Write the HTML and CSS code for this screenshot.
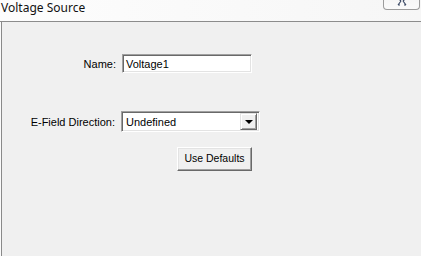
FILE: index.html
```html
<!DOCTYPE html>
<html lang="en">
<head>
    <meta charset="UTF-8">
    <title>Voltage Source</title>
    <link rel="stylesheet" href="styles.css">
</head>
<body>
    <div class="window">
        <div class="title-bar">
            <span class="title">Voltage Source</span>
            <div class="close-button">
                <svg width="10" height="8" viewBox="0 0 10 8">
                    <path d="M1 0 L4 3 M9 0 L6 3 M4 3 L1 7 M6 3 L9 7 M1 7 L3 7 M7 7 L9 7" stroke="#3c4a66" stroke-width="1.2" fill="none"/>
                </svg>
            </div>
        </div>
        <div class="panel">
            <div class="form-row name-row">
                <label class="field-label">Name:</label>
                <div class="text-box">Voltage1</div>
            </div>
            <div class="form-row direction-row">
                <label class="field-label">E-Field Direction:</label>
                <div class="combo-box">
                    <span class="combo-value">Undefined</span>
                    <div class="combo-button"><span class="arrow"></span></div>
                </div>
            </div>
            <div class="button-row">
                <div class="push-button">Use Defaults</div>
            </div>
        </div>
    </div>
</body>
</html>
```

FILE: styles.css
```css
html, body {
    margin: 0;
    padding: 0;
}
body {
    width: 421px;
    height: 256px;
    overflow: hidden;
    background-color: #fbfbfb;
    font-family: "Liberation Sans", Arial, sans-serif;
    font-size: 11px;
    color: #000;
}
.window {
    display: flex;
    flex-direction: column;
    height: 256px;
}
.title-bar {
    display: flex;
    align-items: flex-start;
    height: 21px;
    background: linear-gradient(to right, #fdfdfd, #f6f6f6);
    border-bottom: 1px solid #8c8c8c;
}
.title {
    font-family: "Noto Sans", "Open Sans", sans-serif;
    font-size: 12px;
    line-height: 15px;
    margin-left: 1px;
    color: #111;
}
.close-button {
    margin-left: auto;
    margin-right: 1px;
    margin-top: -10px;
    width: 37px;
    height: 20px;
    border: 1px solid #9c9c9c;
    border-top: none;
    border-radius: 0 0 4px 4px;
    background: linear-gradient(#f2f2f2, #fbfbfb);
    display: flex;
    justify-content: center;
    align-items: flex-end;
    padding-bottom: 3px;
    box-sizing: border-box;
}
.panel {
    flex: 1;
    margin-left: 1px;
    border-left: 1px solid #8a8a8a;
    background-color: #f0f0f0;
    padding-top: 32px;
}
.form-row {
    display: flex;
    align-items: center;
}
.field-label {
    width: 120px;
    text-align: right;
    padding-right: 6px;
    box-sizing: border-box;
}
.text-box {
    width: 130px;
    height: 19px;
    box-sizing: border-box;
    border: 1px solid;
    border-color: #a0a0a0 #ffffff #ffffff #a0a0a0;
    box-shadow: inset 1px 1px #696969, inset -1px -1px #e3e3e3;
    background-color: #fff;
    padding: 3px 0 0 3px;
    line-height: 13px;
}
.direction-row {
    margin-top: 38px;
}
.direction-row .field-label {
    width: 119px;
}
.combo-box {
    display: flex;
    align-items: center;
    width: 139px;
    height: 21px;
    box-sizing: border-box;
    border: 1px solid;
    border-color: #a0a0a0 #ffffff #ffffff #a0a0a0;
    box-shadow: inset 1px 1px #696969, inset -1px -1px #e3e3e3;
    background-color: #fff;
    padding: 2px;
}
.combo-value {
    flex: 1;
    padding-left: 2px;
}
.combo-button {
    width: 17px;
    height: 17px;
    box-sizing: border-box;
    background-color: #f0f0f0;
    border: 1px solid;
    border-color: #e3e3e3 #696969 #696969 #e3e3e3;
    box-shadow: inset 1px 1px #fff, inset -1px -1px #a0a0a0;
    display: flex;
    justify-content: center;
    align-items: center;
}
.arrow {
    width: 0;
    height: 0;
    border-left: 4px solid transparent;
    border-right: 4px solid transparent;
    border-top: 4px solid #000;
    margin-top: 1px;
}
.button-row {
    display: flex;
    padding-left: 175px;
    margin-top: 15px;
}
.push-button {
    width: 75px;
    height: 24px;
    box-sizing: border-box;
    background-color: #f0f0f0;
    border: 1px solid;
    border-color: #ffffff #696969 #696969 #ffffff;
    box-shadow: inset -1px -1px #a0a0a0, inset 1px 1px #e3e3e3;
    text-align: center;
    line-height: 21px;
    font-size: 10.5px;
}
```
